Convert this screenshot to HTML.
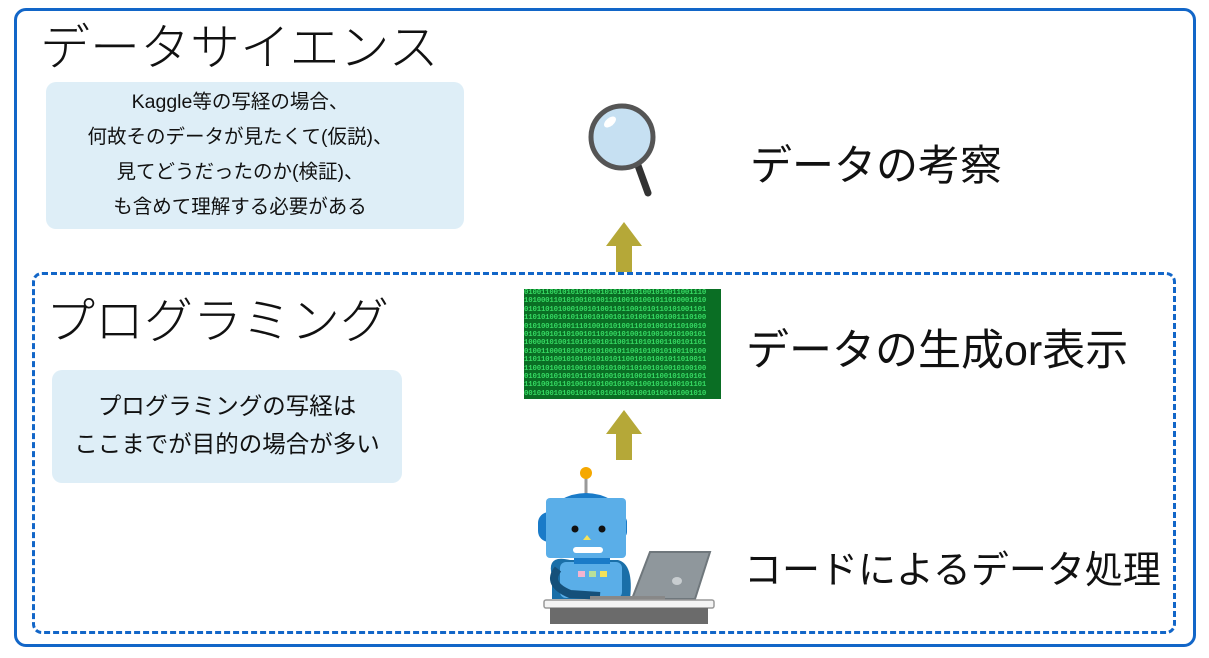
<!DOCTYPE html>
<html><head><meta charset="utf-8"><style>
body{margin:0;width:1209px;height:658px;background:#fff;position:relative;overflow:hidden;font-family:"Liberation Sans","Noto Sans CJK JP",sans-serif;color:#111}
.a{position:absolute;white-space:nowrap}
.outer{position:absolute;left:14px;top:8px;width:1176px;height:633px;border:3px solid #1266c8;border-radius:12px}
.dash{position:absolute;left:32px;top:272px;width:1138px;height:356px;border:3px dashed #1266c8;border-radius:10px}
.box{position:absolute;background:#deeef7;border-radius:10px;text-align:center;color:#111}
.bin{position:absolute;left:524px;top:289px;width:197px;height:110px;background:#0a6e24;overflow:hidden;font-family:"Liberation Mono",monospace;font-size:7.4px;line-height:8.4px;color:#35d862;font-weight:bold;letter-spacing:-0.2px}
</style></head><body>
<div class="outer"></div>
<div class="dash"></div>
<div class="a" style="left:40px;top:8px;font-size:50px;font-weight:300">データサイエンス</div>
<div class="box" style="left:46px;top:82px;width:418px;height:147px;box-sizing:border-box;line-height:35px;padding-top:3px;padding-right:30px;font-size:19.5px">Kaggle等の写経の場合、<br>何故そのデータが見たくて(仮説)、<br>見てどうだったのか(検証)、<br>も含めて理解する必要がある</div>
<div class="a" style="left:46px;top:282px;font-size:49px;font-weight:300">プログラミング</div>
<div class="box" style="left:52px;top:370px;width:350px;height:113px;line-height:38px;padding-top:17px;box-sizing:border-box;font-size:23.5px">プログラミングの写経は<br>ここまでが目的の場合が多い</div>
<div class="a" style="left:750px;top:132px;font-size:42px">データの考察</div>
<div class="a" style="left:746px;top:316px;font-size:43px">データの生成or表示</div>
<div class="a" style="left:744px;top:539px;font-size:38px">コードによるデータ処理</div>
<svg class="a" style="left:580px;top:95px" width="90" height="110">
<line x1="56" y1="65" x2="68" y2="98" stroke="#333" stroke-width="7" stroke-linecap="round"/>
<circle cx="42" cy="42" r="31" fill="#c6e0f2" stroke="#555" stroke-width="5"/>
<ellipse cx="30" cy="27" rx="7" ry="4" fill="#fff" transform="rotate(-40 30 27)"/>
</svg>
<svg class="a" style="left:600px;top:220px" width="50" height="52"><path d="M24 2 L42 26 L32 26 L32 52 L16 52 L16 26 L6 26 Z" fill="#b5a838"/></svg>
<svg class="a" style="left:600px;top:408px" width="50" height="52"><path d="M24 2 L42 26 L32 26 L32 52 L16 52 L16 26 L6 26 Z" fill="#b5a838"/></svg>
<div class="bin">0100110010101010001010110101001010011001110<br>1010001101010010100110100101001011010001010<br>0101101010001001010011011001010110101001101<br>1101010010101100101001011010011001001110100<br>0101001010011101001010100110101001011010010<br>0101001011010010110100101001010010010100101<br>1000010100110101001011001110101001100101101<br>0100110001010010101001011001010010100110100<br>1101101001010100101010110010101001011010011<br>1100101001010010100101001101001010010100100<br>0101001010010110101001010100101100101010101<br>1101001011010010101001010011001010100101101<br>0010100101001010010101001010010100101001010</div>
<svg class="a" style="left:530px;top:464px" width="185" height="162">
<line x1="56" y1="10" x2="56" y2="30" stroke="#999" stroke-width="3"/>
<circle cx="56" cy="9" r="6" fill="#f5a800"/>
<path d="M30 36 Q56 22 82 36 Z" fill="#1a7bc8"/>
<rect x="8" y="48" width="22" height="30" rx="11" fill="#1a7bc8"/>
<rect x="85" y="52" width="12" height="22" rx="6" fill="#1a7bc8"/>
<path d="M22 112 Q16 90 40 96 L88 96 Q104 100 100 135 L22 135 Z" fill="#1a6fa8"/>
<rect x="30" y="98" width="62" height="36" rx="6" fill="#5aaee8"/>
<rect x="44" y="92" width="36" height="8" fill="#1a7bc8"/>
<rect x="16" y="34" width="80" height="60" rx="4" fill="#5aaee8"/>
<circle cx="45" cy="65" r="3.5" fill="#111"/><circle cx="72" cy="65" r="3.5" fill="#111"/>
<path d="M57 71 L61 76 L53 76 Z" fill="#f5e25a"/>
<rect x="43" y="83" width="30" height="6" rx="3" fill="#fff"/>
<rect x="48" y="107" width="7" height="6" fill="#f3b4d0"/><rect x="59" y="107" width="7" height="6" fill="#b8e09a"/><rect x="70" y="107" width="7" height="6" fill="#f5e25a"/>
<path d="M28 105 Q16 120 40 130 L70 132" fill="none" stroke="#15507a" stroke-width="8"/>
<path d="M120 88 L180 88 L165 135 L102 135 Z" fill="#8f979c" stroke="#6f777c" stroke-width="2"/>
<ellipse cx="147" cy="117" rx="5" ry="4" fill="#c8cdd0"/>
<rect x="60" y="132" width="75" height="5" fill="#888"/>
<rect x="14" y="136" width="170" height="8" rx="2" fill="#f4f4f4" stroke="#999" stroke-width="1.5"/>
<rect x="20" y="144" width="158" height="16" fill="#6b6b6b"/>
</svg>
</body></html>
